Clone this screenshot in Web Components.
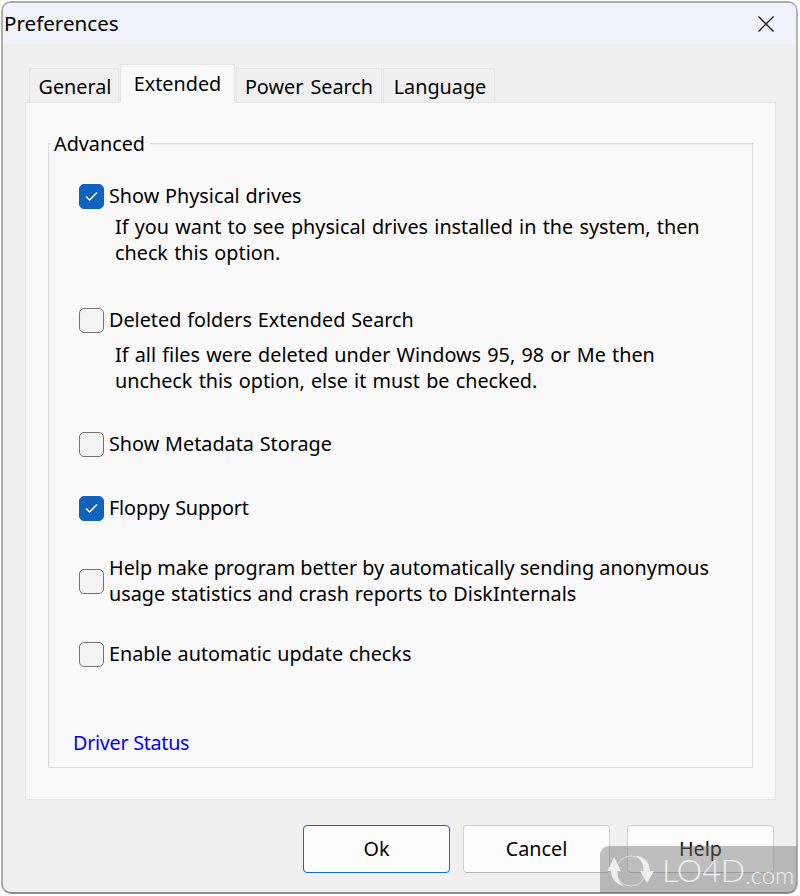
<!DOCTYPE html>
<html>
<head>
<meta charset="utf-8">
<title>Preferences</title>
<style>
    html, body { margin: 0; padding: 0; background: #fff; }
    body { width: 800px; height: 896px; overflow: hidden; font: 19.8px "Noto Sans", sans-serif; color: #000; }
</style>
</head>
<body>
<pref-window heading="Preferences">
    <tab-strip>
        <tab-item style="width:90px;padding-left:2px">General</tab-item>
        <tab-item active style="width:115px">Extended</tab-item>
        <tab-item style="width:146px;word-spacing:2px">Power Search</tab-item>
        <tab-item style="width:112px;padding-left:2px">Language</tab-item>
    </tab-strip>
    <tab-panel>
        <group-box legend="Advanced">
            <check-row checked style="margin-top:38px">Show Physical drives
                <span slot="note">If you want to see physical drives installed in the system, then<br>check this option.</span>
            </check-row>
            <check-row style="margin-top:41px" gap="9">Deleted folders Extended Search
                <span slot="note">If all files were deleted under Windows 95, 98 or Me then<br>uncheck this option, else it must be checked.</span>
            </check-row>
            <check-row style="margin-top:37px">Show Metadata Storage</check-row>
            <check-row checked style="margin-top:38px;letter-spacing:-0.15px">Floppy Support</check-row>
            <check-row style="margin-top:34px"><span style="word-spacing:0">Help make program better by automatically sending anonymous</span><br>usage statistics and crash reports to DiskInternals</check-row>
            <check-row style="margin-top:34px">Enable automatic update checks</check-row>
            <link-label style="margin-top:63px">Driver Status</link-label>
        </group-box>
    </tab-panel>
    <button-bar>
        <push-button default style="width:147px">Ok</push-button>
        <push-button style="width:147px;margin-left:13px">Cancel</push-button>
        <push-button style="width:147px;margin-left:17px">Help</push-button>
    </button-bar>
</pref-window>
<lo4d-badge></lo4d-badge>

<script>
class PrefWindow extends HTMLElement {
    constructor() {
        super()
        this.attachShadow({mode: "open"})
        this.shadowRoot.innerHTML = `
            <style>
                :host {
                    display: flex;
                    flex-direction: column;
                    box-sizing: border-box;
                    width: 797px;
                    height: 893px;
                    margin: 1px 0 0 1px;
                    background: #f0f0f0;
                    border: 2px solid #ababab;
                    border-right-color: #b5b5b5;
                    border-bottom-color: #8e8e8e;
                    border-radius: 10px;
                    overflow: hidden;
                }
                .title {
                    display: flex;
                    align-items: center;
                    justify-content: space-between;
                    height: 41px;
                    padding: 0 21px 0 1px;
                    background: #eef3f9;
                    flex: none;
                }
                .title span { position: relative; top: -1px; font-size: 20.6px; }
                svg { display: block; }
                .body { padding: 20px 22px 0 22px; }
            </style>
            <div class="title">
                <span id="heading"></span>
                <svg width="18" height="18" viewBox="0 0 18 18"><path d="M1.5 1.5L16.5 16.5M16.5 1.5L1.5 16.5" stroke="#1a1a1a" stroke-width="1.4" fill="none"/></svg>
            </div>
            <div class="body"><slot></slot></div>
        `
        this.shadowRoot.getElementById("heading").textContent = this.getAttribute("heading")
    }
}

class TabStrip extends HTMLElement {
    constructor() {
        super()
        this.attachShadow({mode: "open"})
        this.shadowRoot.innerHTML = `
            <style>
                :host {
                    display: flex;
                    align-items: flex-end;
                    height: 39px;
                    padding-left: 4px;
                    gap: 1px;
                    position: relative;
                    z-index: 1;
                    margin-bottom: -1px;
                }
            </style>
            <slot></slot>
        `
    }
}

class TabItem extends HTMLElement {
    constructor() {
        super()
        this.attachShadow({mode: "open"})
        this.shadowRoot.innerHTML = `
            <style>
                :host {
                    display: flex;
                    align-items: center;
                    justify-content: center;
                    box-sizing: border-box;
                    height: 35px;
                    background: #f0f0f0;
                    border: 1px solid #e5e5e5;
                    padding-top: 2px;
                }
                :host([active]) {
                    height: 39px;
                    background: #f9f9f9;
                    border-bottom-color: #f9f9f9;
                    padding-top: 0;
                    padding-bottom: 1px;
                }
            </style>
            <slot></slot>
        `
    }
}

class TabPanel extends HTMLElement {
    constructor() {
        super()
        this.attachShadow({mode: "open"})
        this.shadowRoot.innerHTML = `
            <style>
                :host {
                    display: block;
                    box-sizing: border-box;
                    width: 751px;
                    height: 698px;
                    background: #f9f9f9;
                    border: 1px solid #e5e5e5;
                    padding: 40px 0 0 22px;
                }
            </style>
            <slot></slot>
        `
    }
}

class GroupBox extends HTMLElement {
    constructor() {
        super()
        this.attachShadow({mode: "open"})
        this.shadowRoot.innerHTML = `
            <style>
                :host {
                    display: block;
                    box-sizing: border-box;
                    position: relative;
                    width: 705px;
                    height: 625px;
                    border: 1px solid #dcdcdc;
                    box-shadow: inset 1px 1px 0 #f2f2f2;
                    padding-left: 30px;
                }
                .legend {
                    position: absolute;
                    left: 2px;
                    top: -14px;
                    padding: 0 5px 0 3px;
                    background: #f9f9f9;
                    line-height: 28px;
                }
                .rows { padding-top: 1px; }
            </style>
            <div class="legend" id="legend"></div>
            <div class="rows"><slot></slot></div>
        `
        this.shadowRoot.getElementById("legend").textContent = this.getAttribute("legend")
    }
}

class CheckRow extends HTMLElement {
    constructor() {
        super()
        this.attachShadow({mode: "open"})
        this.shadowRoot.innerHTML = `
            <style>
                :host { display: block; line-height: 26px; word-spacing: 0.7px; }
                .line { display: flex; align-items: center; gap: 5px; }
                .box {
                    flex: none;
                    box-sizing: border-box;
                    width: 25px;
                    height: 25px;
                    border-radius: 5px;
                    background: #f3f3f3;
                    border: 1px solid #757575;
                    display: flex;
                    align-items: center;
                    justify-content: center;
                }
                :host([checked]) .box { background: #0f62bd; border-color: #0f62bd; }
                svg { display: none; }
                :host([checked]) svg { display: block; }
                .note { padding: 5px 0 0 36px; word-spacing: 1.1px; }
                .note:not(.has) { display: none; }
            </style>
            <div class="line">
                <div class="box"><svg width="15" height="12" viewBox="0 0 15 12"><path d="M2 6.5L5.6 10L13 2.5" stroke="#fff" stroke-width="1.5" fill="none"/></svg></div>
                <div><slot></slot></div>
            </div>
            <div class="note" id="note"><slot name="note"></slot></div>
        `
    }

    connectedCallback() {
        if (this.querySelector("[slot=note]")) {
            this.shadowRoot.getElementById("note").classList.add("has")
        }
        if (this.getAttribute("gap")) {
            this.shadowRoot.getElementById("note").style.paddingTop = this.getAttribute("gap") + "px"
        }
    }
}

class LinkLabel extends HTMLElement {
    constructor() {
        super()
        this.attachShadow({mode: "open"})
        this.shadowRoot.innerHTML = `
            <style>
                :host { display: block; color: #0000ff; line-height: 26px; margin-left: -6px; letter-spacing: -0.3px; }
            </style>
            <slot></slot>
        `
    }
}

class ButtonBar extends HTMLElement {
    constructor() {
        super()
        this.attachShadow({mode: "open"})
        this.shadowRoot.innerHTML = `
            <style>
                :host { display: flex; padding: 25px 0 0 278px; }
            </style>
            <slot></slot>
        `
    }
}

class PushButton extends HTMLElement {
    constructor() {
        super()
        this.attachShadow({mode: "open"})
        this.shadowRoot.innerHTML = `
            <style>
                :host {
                    display: flex;
                    align-items: center;
                    justify-content: center;
                    box-sizing: border-box;
                    height: 48px;
                    padding-bottom: 2px;
                    background: #fdfdfd;
                    border: 1px solid #d0d0d0;
                    border-bottom-color: #b8b8b8;
                    border-radius: 4px;
                }
                :host([default]) { border: 1.5px solid #0f6cbd; }
            </style>
            <slot></slot>
        `
    }
}

class Lo4dBadge extends HTMLElement {
    constructor() {
        super()
        this.attachShadow({mode: "open"})
        this.shadowRoot.innerHTML = `
            <style>
                :host {
                    display: flex;
                    align-items: center;
                    position: absolute;
                    left: 600px;
                    top: 846px;
                    width: 197px;
                    height: 47px;
                    background: rgba(120,120,120,0.47);
                    border-radius: 9px 0 9px 0;
                    color: #f0f0f0;
                    font-family: "Lato", sans-serif;
                    font-weight: 300;
                    white-space: nowrap;
                }
                svg { flex: none; margin-left: 7px; }
                .name { font-size: 32px; margin-left: 7px; }
                .com { font-size: 24px; position: relative; top: 5px; }
            </style>
            <svg width="48" height="36" viewBox="0 0 48 36">
                <circle cx="24" cy="19" r="15" fill="none" stroke="#dcdcdc" stroke-width="1"/>
                <path d="M7 5L14 19H10.5C10.5 26 12 31 17 34C10 33 4 27 4 19H0.5Z" fill="#eeeeee"/>
                <path d="M40 31L33 19H36.5C36.5 12 34 7 29 4C37 4 43 11 43 19H47Z" fill="#eeeeee"/>
            </svg>
            <span class="name">LO4D</span><span class="com">.com</span>
        `
    }
}

customElements.define("pref-window", PrefWindow)
customElements.define("tab-strip", TabStrip)
customElements.define("tab-item", TabItem)
customElements.define("tab-panel", TabPanel)
customElements.define("group-box", GroupBox)
customElements.define("check-row", CheckRow)
customElements.define("link-label", LinkLabel)
customElements.define("button-bar", ButtonBar)
customElements.define("push-button", PushButton)
customElements.define("lo4d-badge", Lo4dBadge)
</script>
</body>
</html>
